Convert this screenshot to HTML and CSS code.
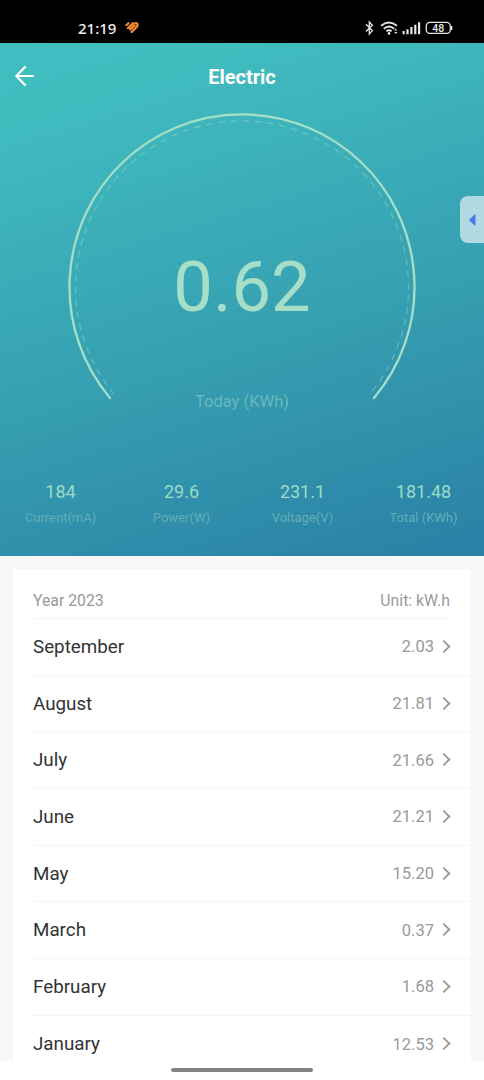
FILE: index.html
```html
<!DOCTYPE html>
<html lang="en">
<head>
<meta charset="utf-8">
<title>Electric</title>
<link rel="stylesheet" href="styles.css">
</head>
<body>
<div class="screen">
  <div class="status">
    <span class="clock">21:19</span>
    <svg class="app-mark" width="14" height="13" viewBox="0 0 14 13" fill="none" stroke="#ee8a35" stroke-width="2.3" stroke-linecap="round"><path d="M1.5 4 3.4 2.3M3 7.1 8.2 2.2M5.2 8.3 9.5 4.3M6.7 10.9 12.3 5.3M10.6 2.2Q12.4 1.8 12.4 3.9V5"/></svg>
    <svg class="indicators" width="90" height="18" viewBox="0 0 90 18" fill="none" stroke="#e6e6e6">
      <path d="M3 5.3 9.3 11.6 6.3 15V3L9.3 6.2 3 12.5" stroke-width="1.3"/>
      <path d="M18 6.8Q26 .2 34 6.8M20.8 9.7Q26 5.2 31.2 9.7M23.4 12.3Q26 10.1 28.6 12.3" stroke-width="1.8"/>
      <circle cx="26" cy="14.4" r="1.3" fill="#e6e6e6" stroke="none"/>
      <path d="m31.2 11.4 1.6-2 1.6 2zM31.2 13l1.6 2 1.6-2z" fill="#e6e6e6" stroke="none"/>
      <path d="M40.6 15.3v-3.2M44.5 15.3v-5M48.4 15.3V8M52.3 15.3V5.7M56.1 15.3V3.2" stroke-width="2.2"/>
      <rect x="63.3" y="3.4" width="24" height="11" rx="3.6" stroke-width="1.3"/>
      <path d="M88.6 7v4" stroke-width="1.4"/>
      <text class="battery-text" x="75.3" y="12.6" text-anchor="middle">48</text>
    </svg>
  </div>
  <main class="hero">
    <header class="nav">
      <svg class="back" width="20" height="22" viewBox="0 0 20 22" fill="none" stroke="#fff" stroke-width="2.2" stroke-linecap="round" stroke-linejoin="round"><path d="M10 2 1.3 11l8.7 9M1.3 11H18"/></svg>
      <h1 class="title">Electric</h1>
    </header>
    <section class="gauge">
      <svg class="dial" width="350" height="290" viewBox="0 0 350 290" fill="none">
        <path d="M43 285A172.5 172.5 0 1 1 307 285" stroke="#a6dec8" stroke-width="2.3" stroke-linecap="round"/>
        <path d="M47.5 281.5A166.5 166.5 0 1 1 302.5 281.5" stroke="#a6dec8" stroke-opacity=".48" stroke-width="1.1" stroke-dasharray="6.7 5.5"/>
      </svg>
      <div class="reading">0.62</div>
      <div class="caption">Today (KWh)</div>
    </section>
    <section class="metrics">
      <div class="metric"><b>184</b><span>Current(mA)</span></div>
      <div class="metric"><b>29.6</b><span>Power(W)</span></div>
      <div class="metric"><b>231.1</b><span>Voltage(V)</span></div>
      <div class="metric"><b>181.48</b><span>Total (KWh)</span></div>
    </section>
    <div class="side-tab"><svg width="7" height="12" viewBox="0 0 7 12"><path d="M0 6 5.5.5Q6.5.3 6.5 1.2v9.6q0 .9-1 .7z" fill="#4e75ed"/></svg></div>
  </main>
  <section class="history">
    <div class="card">
      <div class="card-head"><span>Year 2023</span><span>Unit: kW.h</span></div>
      <div class="row"><span>September</span><span class="value">2.03</span><i class="chevron"></i></div>
      <div class="row"><span>August</span><span class="value">21.81</span><i class="chevron"></i></div>
      <div class="row"><span>July</span><span class="value">21.66</span><i class="chevron"></i></div>
      <div class="row"><span>June</span><span class="value">21.21</span><i class="chevron"></i></div>
      <div class="row"><span>May</span><span class="value">15.20</span><i class="chevron"></i></div>
      <div class="row"><span>March</span><span class="value">0.37</span><i class="chevron"></i></div>
      <div class="row"><span>February</span><span class="value">1.68</span><i class="chevron"></i></div>
      <div class="row"><span>January</span><span class="value">12.53</span><i class="chevron"></i></div>
    </div>
  </section>
  <footer class="gesture"><div class="handle"></div></footer>
</div>
</body>
</html>
```
FILE: styles.css
```css
* { box-sizing: border-box; }
body { margin: 0; font-family: Roboto, "Liberation Sans", sans-serif; }
.screen { width: 484px; height: 1080px; display: flex; flex-direction: column; overflow: hidden; background: #fff; }
.status { height: 43px; flex: none; background: #000; display: flex; align-items: center; padding: 12px 31px 0 78px; }
.clock { font: 500 15px/20px "Noto Sans", sans-serif; color: #f1f1f1; width: 47px; }
.indicators { margin-left: auto; }
.battery-text { font: 500 10.5px Roboto, sans-serif; fill: #e6e6e6; stroke: none; }
.hero { height: 513px; flex: none; position: relative; background: linear-gradient(163deg, #41bec1 0%, #40bcbf 12%, #359db0 60%, #2a7fa5 100%); }
.nav { height: 68px; display: grid; grid-template-columns: 60px 1fr 60px; align-items: center; }
.back { margin-left: 15px; margin-top: -2px; }
.title { margin: 0; text-align: center; font-size: 20px; line-height: 24px; font-weight: 700; color: #fff; }
.gauge { height: 290px; display: grid; justify-content: center; grid-template: 290px / 350px; }
.gauge > * { grid-area: 1 / 1; text-align: center; }
.dial { margin-top: 2px; }
.reading { padding-top: 131px; font-size: 70.5px; line-height: 90px; color: #a6dec8; }
.caption { padding-top: 281px; font-size: 16.5px; line-height: 20px; color: #68b9bc; }
.metrics { margin-top: 80px; display: grid; grid-template-columns: repeat(4, 121px); }
.metric { display: flex; flex-direction: column; text-align: center; }
.metric b { font-size: 18px; line-height: 22px; font-weight: 400; color: #9bdbc8; }
.metric span { margin-top: 6px; font-size: 13px; line-height: 17px; color: #63adb7; }
.side-tab { position: absolute; right: 0; top: 153px; width: 24px; height: 47px; border-radius: 8px 0 0 8px; background: #afdae1; display: flex; align-items: center; padding-left: 9px; }
.history { flex: none; height: 505px; padding: 13px 13px 0; background: #f7f7f7; overflow: hidden; }
.card { background: #fff; padding-left: 20px; height: 492px; }
.card-head { height: 50px; margin-right: 21px; padding-top: 14px; display: flex; justify-content: space-between; font-size: 15.8px; line-height: 36px; color: #999; border-bottom: 1px solid #f5f5f5; }
.row { height: 56.7px; display: flex; align-items: center; border-bottom: 1px solid #f5f5f5; font-size: 18.8px; color: #333; padding-right: 21px; }
.row:last-child { border-bottom: 0; }
.value { margin-left: auto; font-size: 16.5px; color: #999; }
.chevron { width: 10px; height: 10px; border: solid #999; border-width: 2px 2px 0 0; transform: translateY(-.5px) rotate(45deg) scale(.92); margin: 0 1.5px 0 4.5px; }
.gesture { flex: 1; display: flex; justify-content: center; align-items: center; padding-bottom: 1px; }
.handle { width: 142px; height: 4px; border-radius: 2px; background: #838383; }
```
